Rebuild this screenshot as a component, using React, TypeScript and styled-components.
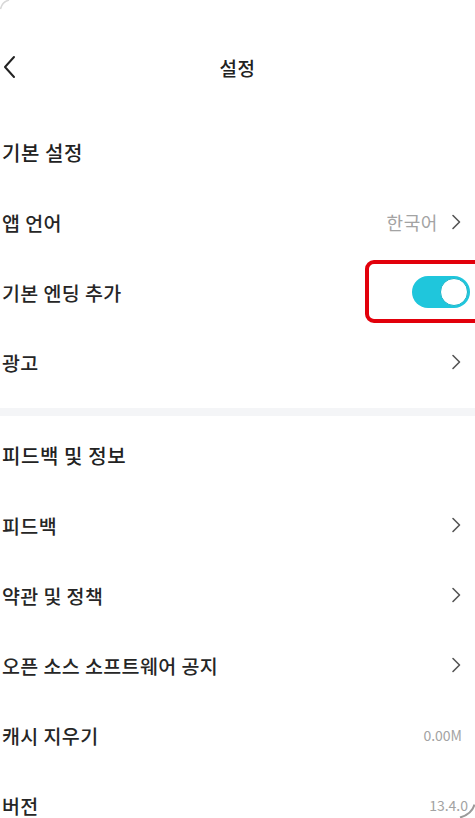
import React from "react";
import styled, { createGlobalStyle } from "styled-components";

const Global = createGlobalStyle`
  html, body { margin: 0; padding: 0; background: #ffffff; }
  body { font-family: "Noto Sans CJK KR", "Noto Sans", sans-serif; -webkit-font-smoothing: antialiased; }
  * { box-sizing: border-box; }
`;

const Screen = styled.div`
  position: relative;
  width: 475px;
  height: 818px;
  overflow: hidden;
  background: #fff;
  display: flex;
  flex-direction: column;
  & > * { flex-shrink: 0; }
`;

const TopBar = styled.div`
  margin-top: 32px;
  height: 70px;
  display: grid;
  grid-template-columns: 60px 1fr 60px;
  align-items: center;
`;

const BackButton = styled.div`
  display: flex;
  align-items: center;
  padding-left: 2px;
  height: 100%;
`;

const Title = styled.div`
  text-align: center;
  font-size: 19px;
  color: #222;
  font-weight: 500;
  letter-spacing: 0.5px;
`;

const SectionTitle = styled.div<{ $top: number }>`
  margin-top: ${(p) => p.$top}px;
  height: 69px;
  display: flex;
  align-items: center;
  padding-left: 2px;
  font-size: 20px;
  font-weight: 500;
  color: #222;
  letter-spacing: 0.6px;
`;

const Row = styled.div`
  height: 70px;
  display: flex;
  align-items: center;
  justify-content: space-between;
  padding-left: 2px;
  padding-right: 13px;
`;

const Label = styled.span`
  font-size: 19.5px;
  font-weight: 500;
  color: #262626;
  letter-spacing: 0.4px;
`;

const Trailing = styled.div`
  display: flex;
  align-items: center;
  gap: 12px;
`;

const Value = styled.span<{ $small?: boolean }>`
  font-size: ${(p) => (p.$small ? "14px" : "18px")};
  color: #a3a3a3;
  font-weight: 400;
  letter-spacing: ${(p) => (p.$small ? "0" : "0.6px")};
`;

const Band = styled.div`
  margin-top: 11px;
  height: 8px;
  background: #f4f5f7;
`;

const ToggleWrap = styled.div`
  position: relative;
  margin-right: -8px;
  display: flex;
  align-items: center;
`;

const Highlight = styled.div`
  position: absolute;
  left: -47px;
  top: -16px;
  width: 130px;
  height: 63px;
  border: 4px solid #e2000b;
  border-radius: 9px;
`;

const Track = styled.div`
  width: 58px;
  height: 32px;
  border-radius: 16px;
  background: #1fc6dc;
  display: flex;
  align-items: center;
  justify-content: flex-end;
  padding-right: 2px;
`;

const Knob = styled.div`
  width: 28px;
  height: 28px;
  border-radius: 50%;
  background: #fff;
  border: 1.5px solid #18b4c8;
`;

const CornerArc = styled.svg`
  position: absolute;
  right: 0;
  bottom: 0;
`;

const TopCorner = styled.svg`
  position: absolute;
  left: 0;
  top: 0;
`;

const Chevron = () => (
  <svg width="12" height="16" viewBox="0 0 12 16">
    <path d="M3 1.5 L9.5 8 L3 14.5" fill="none" stroke="#555" strokeWidth="1.6" strokeLinecap="round" strokeLinejoin="round" />
  </svg>
);

const BackIcon = () => (
  <svg width="16" height="24" viewBox="0 0 16 24">
    <path d="M12 2 L3 12 L12 22" fill="none" stroke="#222" strokeWidth="2" strokeLinecap="round" strokeLinejoin="round" />
  </svg>
);

export default function App() {
  return (
    <>
      <Global />
      <Screen>
        <TopCorner width="14" height="10" viewBox="0 0 14 10">
          <path d="M0.5 9 Q2 2 9 0" fill="none" stroke="#d8d8d8" strokeWidth="1.5" />
        </TopCorner>
        <TopBar>
          <BackButton>
            <BackIcon />
          </BackButton>
          <Title>설정</Title>
          <div />
        </TopBar>

        <SectionTitle $top={16}>기본 설정</SectionTitle>
        <Row>
          <Label>앱 언어</Label>
          <Trailing>
            <Value>한국어</Value>
            <Chevron />
          </Trailing>
        </Row>
        <Row>
          <Label>기본 엔딩 추가</Label>
          <ToggleWrap>
            <Highlight />
            <Track>
              <Knob />
            </Track>
          </ToggleWrap>
        </Row>
        <Row>
          <Label>광고</Label>
          <Chevron />
        </Row>

        <Band />

        <SectionTitle $top={5}>피드백 및 정보</SectionTitle>
        <Row>
          <Label>피드백</Label>
          <Chevron />
        </Row>
        <Row>
          <Label>약관 및 정책</Label>
          <Chevron />
        </Row>
        <Row>
          <Label>오픈 소스 소프트웨어 공지</Label>
          <Chevron />
        </Row>
        <Row>
          <Label>캐시 지우기</Label>
          <Value $small>0.00M</Value>
        </Row>
        <Row>
          <Label>버전</Label>
          <Value $small style={{ marginRight: -6 }}>13.4.0</Value>
        </Row>

        <CornerArc width="16" height="14" viewBox="0 0 16 14">
          <path d="M15.5 0.5 Q13 10 1 13.5" fill="none" stroke="#9a9a9a" strokeWidth="2" />
        </CornerArc>
      </Screen>
    </>
  );
}
